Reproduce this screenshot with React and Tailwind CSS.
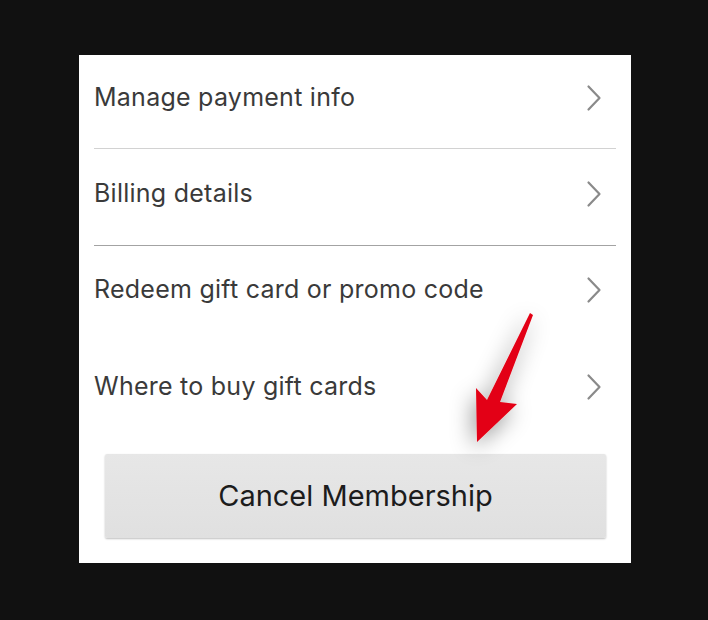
import React from "react";

const rows = [
  { label: "Manage payment info", divider: "border-[#d2d2d2]", h: "h-[93px]" },
  { label: "Billing details", divider: "border-[#a3a3a3]", h: "h-[96px]" },
  { label: "Redeem gift card or promo code", divider: "border-transparent", h: "h-[95px]" },
  { label: "Where to buy gift cards", divider: "border-transparent", h: "h-[96px]" },
];

function Chevron() {
  return (
    <svg width="16" height="28" viewBox="0 0 16 28" className="shrink-0">
      <polyline
        points="2.5,2.5 13.5,14 2.5,25.5"
        fill="none"
        stroke="#8a8a8a"
        strokeWidth="2.2"
        strokeLinecap="round"
        strokeLinejoin="round"
      />
    </svg>
  );
}

function Arrow() {
  return (
    <svg
      width="120"
      height="190"
      viewBox="0 0 120 190"
      className="absolute left-[370px] top-[230px] pointer-events-none"
    >
      <defs>
        <filter id="glow" x="-80%" y="-50%" width="260%" height="200%">
          <feDropShadow dx="-3" dy="6" stdDeviation="11" floodColor="#000" floodOpacity="0.4" />
        </filter>
      </defs>
      <polygon
        points="81,28 84,30 51,117 68,119 28,157 27,103 38,115"
        fill="#e30613"
        filter="url(#glow)"
      />
    </svg>
  );
}

export default function App() {
  return (
    <div
      className="min-h-screen bg-[#111111] pt-[55px] pl-[79px]"
      style={{ fontFamily: "Inter, 'Liberation Sans', sans-serif" }}
    >
      <div className="relative w-[552px] h-[508px] bg-white overflow-hidden">
        <div className="flex flex-col">
          {rows.map((r, i) => (
            <div key={i} className={`mx-[15px] border-b ${r.divider}`}>
              <div className={`flex items-center justify-between ${r.h} pr-[14px]`}>
                <span className="text-[25px] tracking-[0.25px] text-[#3a3a3a] -mt-[7px]">
                  {r.label}
                </span>
                <div className="-mt-[7px]">
                  <Chevron />
                </div>
              </div>
            </div>
          ))}
        </div>

        {/* Cancel button */}
        <div className="px-[26px] pt-[15px]">
          <button className="w-[501px] h-[84px] rounded-[2px] bg-gradient-to-b from-[#e7e7e7] to-[#e0e0e0] shadow-[0_1px_2px_rgba(0,0,0,0.25)] text-[29px] text-[#1c1c1c] flex items-center justify-center">
            Cancel Membership
          </button>
        </div>

        <Arrow />
      </div>
    </div>
  );
}
